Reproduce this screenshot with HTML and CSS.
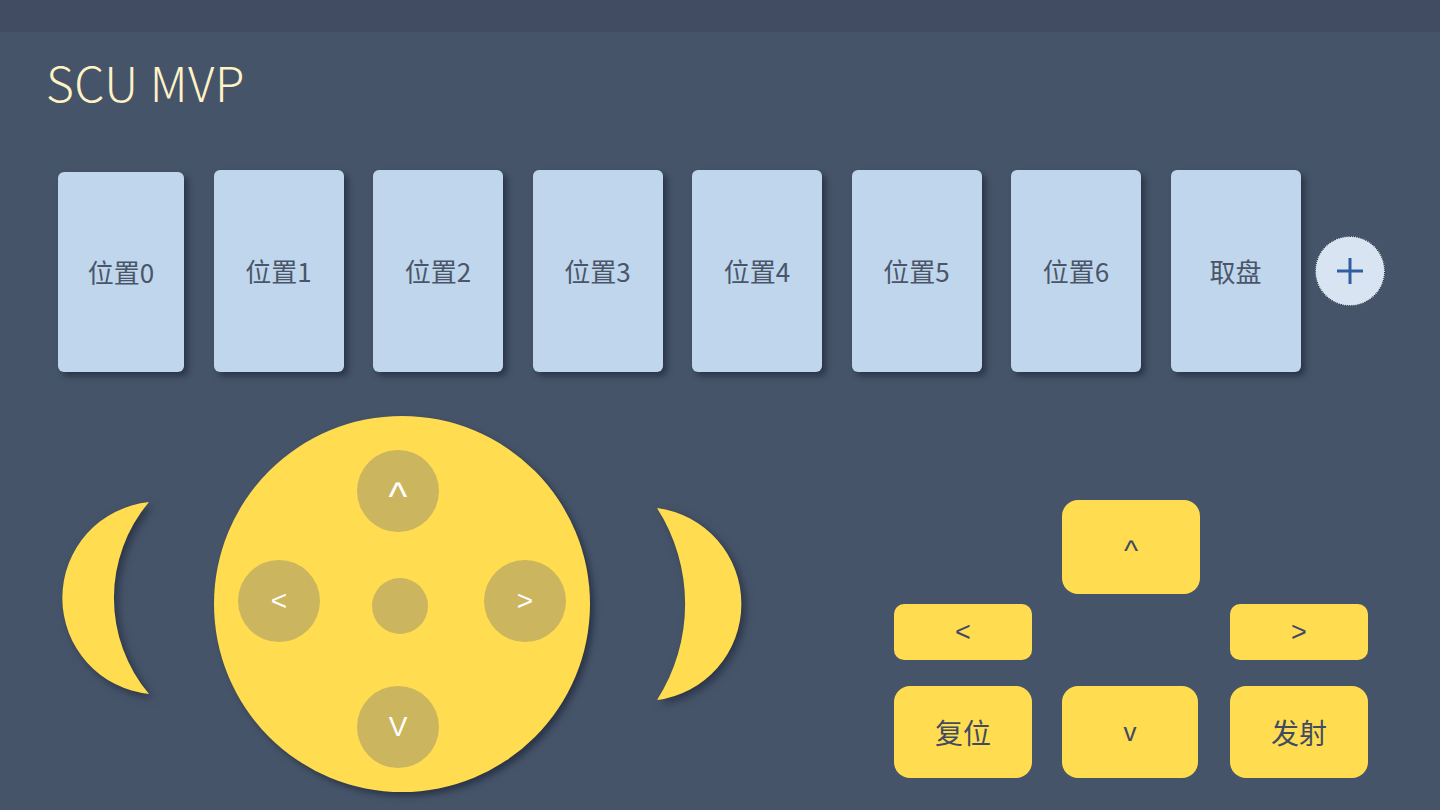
FILE: index.html
```html
<!DOCTYPE html>
<html lang="zh">
<head>
<meta charset="utf-8">
<title>SCU MVP</title>
<link rel="stylesheet" href="styles.css">
</head>
<body>
<div class="topbar"></div>
<h1 class="title">SCU MVP</h1>
<div class="cards">
  <div class="card card-small">位置0</div>
  <div class="card">位置1</div>
  <div class="card">位置2</div>
  <div class="card">位置3</div>
  <div class="card">位置4</div>
  <div class="card">位置5</div>
  <div class="card">位置6</div>
  <div class="card">取盘</div>
  <div class="add-btn">
    <svg width="28" height="28" viewBox="0 0 28 28"><path d="M14 1V27M1 14H27" stroke="#2f5f9f" stroke-width="3"/></svg>
  </div>
</div>
<div class="controls">
  <svg class="moon moon-left" width="90" height="194" viewBox="0 0 90 194">
    <path d="M87 1 A96.5 96.5 0 0 0 87 193 A149 149 0 0 1 87 1 Z" fill="#ffdc50"/>
  </svg>
  <div class="joystick">
    <div class="jbtn j-up">^</div>
    <div class="jbtn j-left">&lt;</div>
    <div class="jcenter"></div>
    <div class="jbtn j-right">&gt;</div>
    <div class="jbtn j-down">V</div>
  </div>
  <svg class="moon moon-right" width="88" height="194" viewBox="0 0 88 194">
    <path d="M1 1 A96.8 96.8 0 0 1 1 193 A178 178 0 0 0 1 1 Z" fill="#ffdc50"/>
  </svg>
  <div class="pad">
    <div class="pbtn p-up">^</div>
    <div class="pbtn p-left">&lt;</div>
    <div class="pbtn p-right">&gt;</div>
    <div class="pbtn p-reset">复位</div>
    <div class="pbtn p-down">v</div>
    <div class="pbtn p-fire">发射</div>
  </div>
</div>
</body>
</html>
```
FILE: styles.css
```css
html, body {
  margin: 0;
  padding: 0;
}
body {
  width: 1440px;
  height: 810px;
  overflow: hidden;
  background: #465469;
  font-family: "Noto Sans CJK SC", "Liberation Sans", sans-serif;
}
.topbar {
  height: 32px;
  background: #414c63;
}
.title {
  margin: 26px 0 0 46px;
  font-size: 48px;
  line-height: 46px;
  font-weight: 300;
  color: #fff3c6;
  letter-spacing: 0.5px;
}
.cards {
  display: flex;
  align-items: flex-end;
  gap: 29.5px;
  margin: 66px 0 0 58px;
}
.card {
  width: 130px;
  height: 202px;
  background: #bfd6ec;
  border-radius: 6px;
  box-shadow: 4px 4px 6px rgba(20, 28, 45, 0.55);
  display: flex;
  align-items: center;
  justify-content: center;
  font-size: 26px;
  color: #4a5569;
  padding-bottom: 2px;
  box-sizing: border-box;
}
.card-small {
  width: 126px;
  height: 200px;
}
.add-btn {
  width: 68px;
  height: 68px;
  margin-left: -15px;
  align-self: center;
  border-radius: 50%;
  border: 1px dotted #1f2530;
  background: #d9e4f3;
  display: flex;
  align-items: center;
  justify-content: center;
}
.controls {
  display: flex;
  align-items: flex-start;
  margin-top: 44px;
  padding-left: 62px;
}
.moon {
  display: block;
  filter: drop-shadow(4px 4px 4px rgba(20, 28, 45, 0.55));
}
.moon-left {
  margin-top: 85px;
}
.joystick {
  width: 376px;
  height: 376px;
  margin-left: 62px;
  border-radius: 50%;
  background: #ffdc50;
  box-shadow: 4px 4px 6px rgba(20, 28, 45, 0.55);
  box-sizing: border-box;
  padding: 34px 0 0 24px;
  display: grid;
  grid-template-columns: 82px 82px 82px;
  column-gap: 41px;
  grid-template-rows: 82px 28px 82px 44px 82px;
  align-content: start;
}
.jbtn {
  width: 82px;
  height: 82px;
  border-radius: 50%;
  background: #cbb55e;
  color: #ffffff;
  display: flex;
  align-items: center;
  justify-content: center;
  font-family: "Liberation Sans", sans-serif;
  font-size: 28px;
}
.j-up {
  grid-column: 2;
  grid-row: 1;
  margin-left: -4px;
  font-size: 40px;
  box-sizing: border-box;
  padding-top: 10px;
}
.j-left { grid-column: 1; grid-row: 3; }
.j-right { grid-column: 3; grid-row: 3; }
.j-down { grid-column: 2; grid-row: 5; margin-left: -4px; }
.jcenter {
  grid-column: 2;
  grid-row: 3;
  width: 56px;
  height: 56px;
  border-radius: 50%;
  background: #cbb55e;
  justify-self: center;
  align-self: center;
  margin-top: 10px;
  margin-left: -4px;
}
.moon-right {
  margin-left: 66px;
  margin-top: 91px;
}
.pad {
  margin-left: auto;
  margin-right: 72px;
  margin-top: 84px;
  display: grid;
  grid-template-columns: 138px 138px 138px;
  column-gap: 30px;
  row-gap: 0;
  grid-template-rows: 94px 10px 56px 26px 92px;
}
.pbtn {
  background: #ffdc50;
  border-radius: 16px;
  color: #3f4b62;
  display: flex;
  align-items: center;
  justify-content: center;
  font-size: 28px;
}
.p-up {
  grid-column: 2;
  grid-row: 1;
  font-family: "Liberation Sans", sans-serif;
  font-size: 30px;
  box-sizing: border-box;
  padding-top: 8px;
}
.p-left { grid-column: 1; grid-row: 3; border-radius: 10px; font-family: "Liberation Sans", sans-serif; font-size: 27px; }
.p-right { grid-column: 3; grid-row: 3; border-radius: 10px; font-family: "Liberation Sans", sans-serif; font-size: 27px; }
.p-reset { grid-column: 1; grid-row: 5; }
.p-down { grid-column: 2; grid-row: 5; width: 136px; font-family: "Liberation Sans", sans-serif; font-size: 26px; }
.p-fire { grid-column: 3; grid-row: 5; }
```
